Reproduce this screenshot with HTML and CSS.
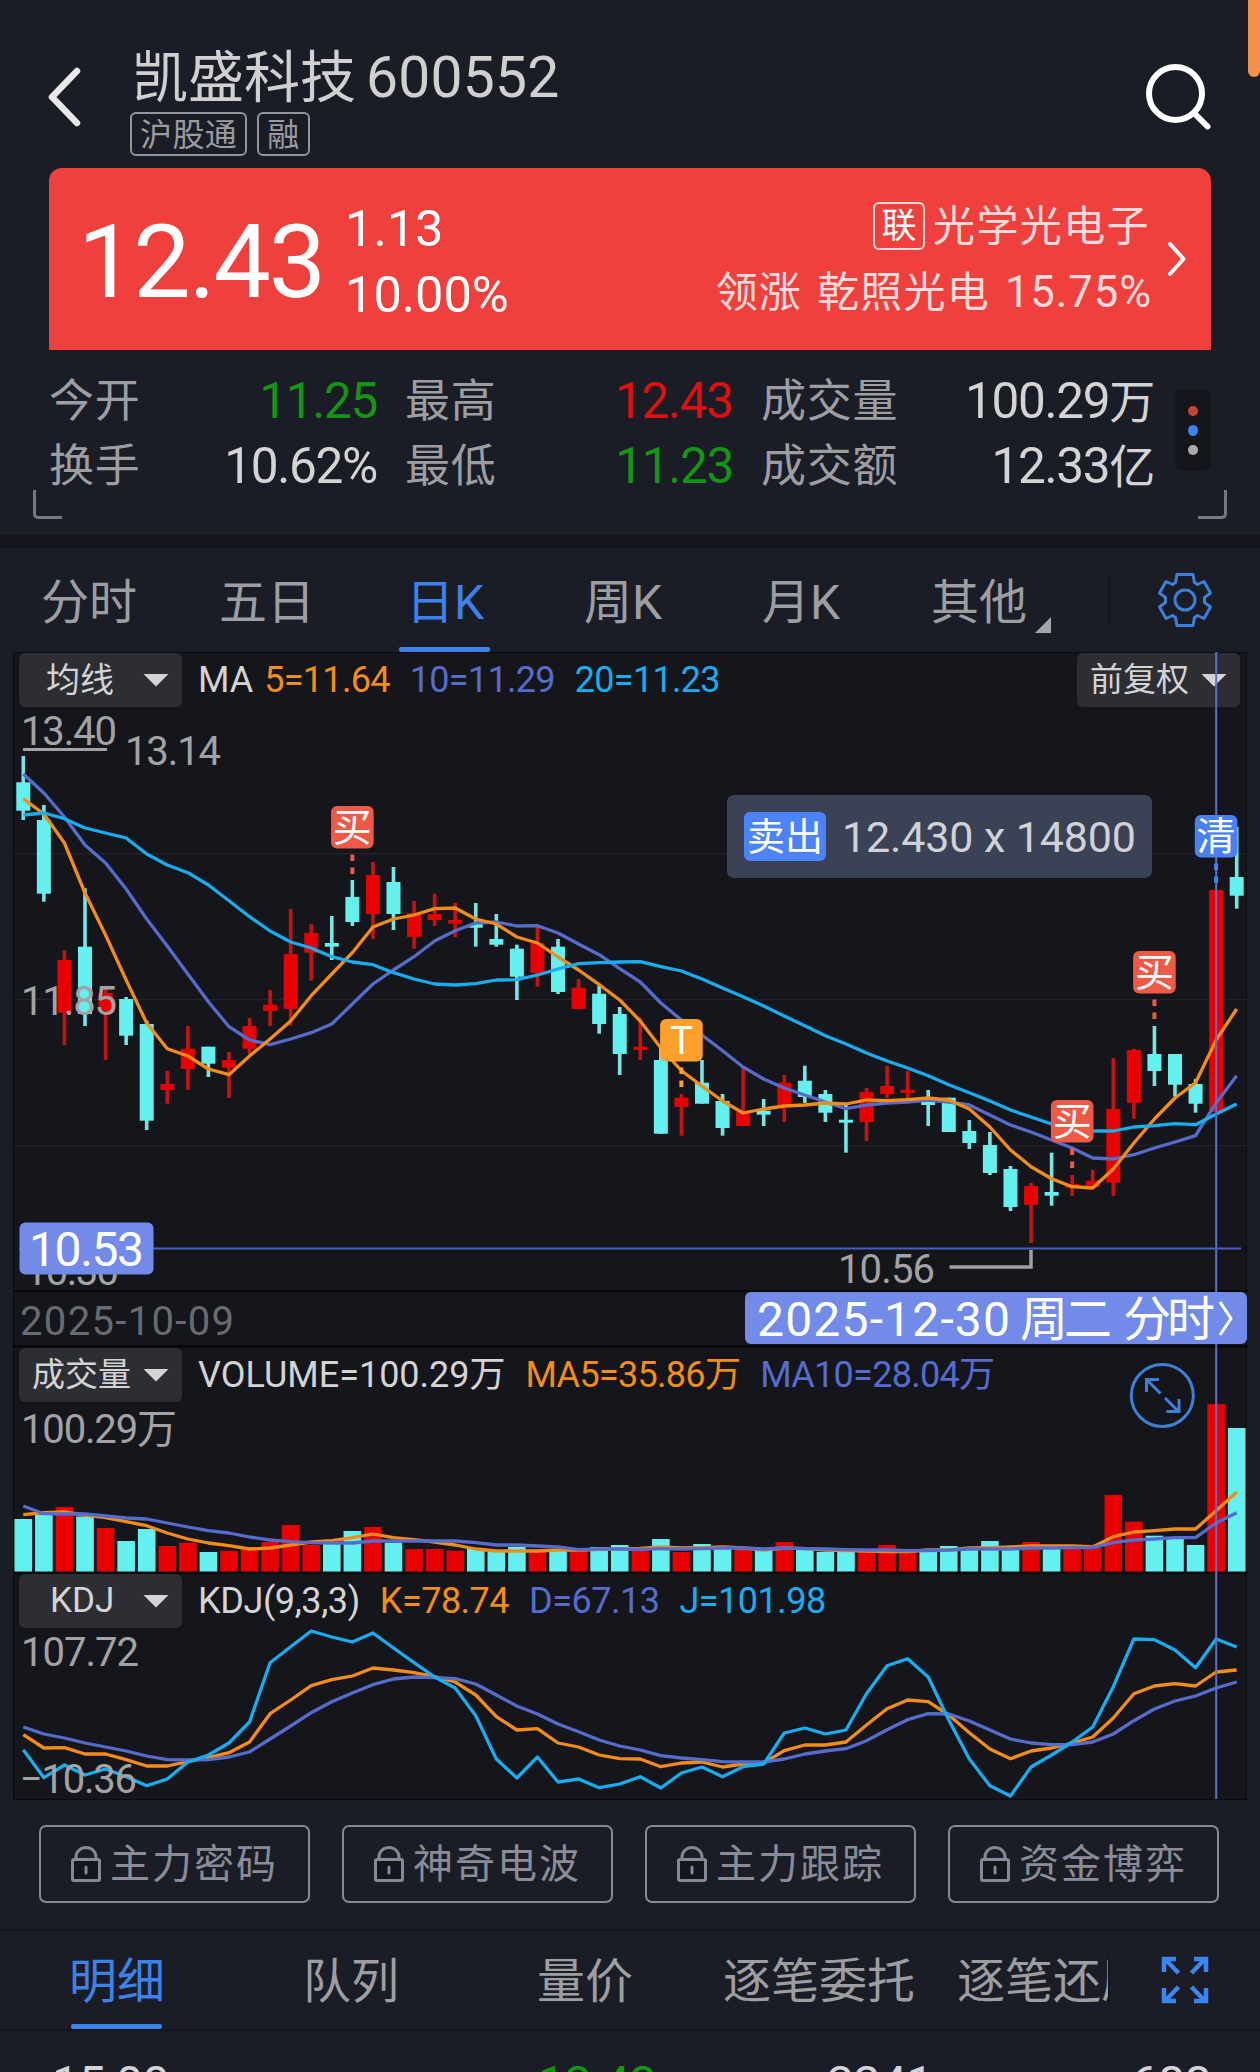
FILE: index.html
```html
<!DOCTYPE html>
<html lang="zh-CN">
<head>
<meta charset="utf-8">
<title>凯盛科技 600552</title>
<link rel="stylesheet" href="styles.css">
</head>
<body>
<div class="app">
  <div class="edge-bar"></div>
  <header class="header">
    <svg class="back" width="36" height="62" viewBox="0 0 36 62"><path d="M31 5 6 31 31 57"/></svg>
    <div class="title-block">
      <h1 class="title">凯盛科技<span class="code">600552</span></h1>
      <div class="tags"><span class="tag">沪股通</span><span class="tag">融</span></div>
    </div>
    <svg class="search" width="68" height="68" viewBox="0 0 68 68"><circle cx="30.5" cy="30.500" r="26.500"/><path d="M49 50 62.500 63.500"/></svg>
  </header>

  <section class="quote">
    <div class="price">12.43</div>
    <div class="change"><div>1.13</div><div>10.00%</div></div>
    <div class="sector">
      <div class="sector-name"><span class="link-tag">联</span><span>光学光电子</span></div>
      <div class="leader"><span>领涨</span><span>乾照光电</span><span class="pct">15.75%</span></div>
    </div>
    <svg class="more" width="20" height="38" viewBox="0 0 20 38"><path d="M3 4 16.500 19 3 34"/></svg>
  </section>

  <section class="stats">
    <div class="stat-grid">
      <span class="label">今开</span><span class="value down">11.25</span>
      <span class="label">最高</span><span class="value up">12.43</span>
      <span class="label">成交量</span><span class="value">100.29<small>万</small></span>
      <span class="label">换手</span><span class="value">10.62%</span>
      <span class="label">最低</span><span class="value down">11.23</span>
      <span class="label">成交额</span><span class="value">12.33<small>亿</small></span>
    </div>
    <div class="dots"><i class="dot red"></i><i class="dot blue"></i><i class="dot"></i></div>
  </section>
  <div class="corners"><i class="corner left"></i><i class="corner right"></i></div>

  <nav class="periods">
    <span class="period">分时</span>
    <span class="period">五日</span>
    <span class="period active">日K</span>
    <span class="period">周K</span>
    <span class="period">月K</span>
    <span class="period other">其他</span>
    <span class="gear-cell"><svg width="56" height="56" viewBox="-28 -28 56 56"><path d="M-8 -25.500H8L9.500 -17.500 12.500 -15.500 19 -18.500 25.500 -7 19.500 -2.500V2.500L25.500 7 19 18.500 12.500 15.500 9.500 17.500 8 25.500H-8L-9.500 17.500 -12.500 15.500 -19 18.500 -25.500 7 -19.500 2.500V-2.500L-25.500 -7 -19 -18.500 -12.500 -15.500 -9.500 -17.500Z"/><circle r="10"/></svg></span>
  </nav>

  <section class="chart">
    <div class="toolbar price-bar">
      <span class="select">均线<i class="caret"></i></span>
      <span class="legend"><b class="name">MA</b><b class="ma5">5=11.64</b><b class="ma10">10=11.29</b><b class="ma20">20=11.23</b></span>
      <span class="select adjust">前复权<i class="caret"></i></span>
    </div>
    <div class="toolbar volume-bar">
      <span class="select wide">成交量<i class="caret"></i></span>
      <span class="legend"><b>VOLUME=100.29万</b><b class="ma5">MA5=35.86万</b><b class="ma10">MA10=28.04万</b></span>
    </div>
    <div class="toolbar kdj-bar">
      <span class="select latin">KDJ<i class="caret"></i></span>
      <span class="legend kdj"><b>KDJ(9,3,3)</b><b class="ma5">K=78.74</b><b class="ma10">D=67.13</b><b class="ma20">J=101.98</b></span>
    </div>
    <svg class="plot" id="plot" viewBox="0 652 1260 1148" width="1260" height="1148"></svg>
  </section>

  <section class="tools">
    <span class="tool"><svg class="lock" width="30" height="36" viewBox="0 0 30 36"><path d="M5 13V11a10 9.500 0 0 1 20 0v2"/><rect x="1.500" y="13.500" width="27" height="21" rx="1.500"/><path class="key" d="M15 21v6"/></svg>主力密码</span>
    <span class="tool"><svg class="lock" width="30" height="36" viewBox="0 0 30 36"><path d="M5 13V11a10 9.500 0 0 1 20 0v2"/><rect x="1.500" y="13.500" width="27" height="21" rx="1.500"/><path class="key" d="M15 21v6"/></svg>神奇电波</span>
    <span class="tool"><svg class="lock" width="30" height="36" viewBox="0 0 30 36"><path d="M5 13V11a10 9.500 0 0 1 20 0v2"/><rect x="1.500" y="13.500" width="27" height="21" rx="1.500"/><path class="key" d="M15 21v6"/></svg>主力跟踪</span>
    <span class="tool"><svg class="lock" width="30" height="36" viewBox="0 0 30 36"><path d="M5 13V11a10 9.500 0 0 1 20 0v2"/><rect x="1.500" y="13.500" width="27" height="21" rx="1.500"/><path class="key" d="M15 21v6"/></svg>资金博弈</span>
  </section>

  <nav class="details">
    <div class="detail-list">
      <span class="detail active">明细</span>
      <span class="detail">队列</span>
      <span class="detail">量价</span>
      <span class="detail">逐笔委托</span>
      <span class="detail">逐笔还原</span>
    </div>
    <span class="expand"><svg width="48" height="48" viewBox="-24 -24 48 48"><path d="M-6.500 -7 -20 -21M-21 -8V-21H-9M6.500 -7 20 -21M21 -8V-21H9M-6.500 7 -20 21M-21 8V21H-9M6.500 7 20 21M21 8V21H9"/></svg></span>
  </nav>
  <div class="trade"><span class="time">15:00</span><span class="deal down">12.43</span><span class="qty">3341</span><span class="count">688</span></div>
</div>
<script src="chart.js"></script>
</body>
</html>
```
FILE: styles.css
```css
* { box-sizing: border-box; }
body {
  margin: 0;
  background: #1b1d26;
  color: #d4d4d5;
  font-family: Roboto, "Noto Sans CJK SC", sans-serif;
  font-weight: 400;
}
svg { display: block; flex: none; }
.app { position: relative; width: 1260px; height: 2072px; overflow: hidden; }
.edge-bar { position: absolute; right: 0; top: 0; width: 12px; height: 77px; background: #f2924c; border-radius: 0 0 6px 6px; }

.header { display: flex; height: 168px; padding: 0 49px 0 46px; }
.back { margin-top: 66px; fill: none; stroke: #e8e8e8; stroke-width: 6.5; stroke-linecap: round; stroke-linejoin: round; }
.title-block { flex: 1; padding: 43px 0 0 48px; }
.title { margin: 0 0 0 2px; font-size: 56px; line-height: 70px; font-weight: 400; white-space: nowrap; color: #d0d0d0; }
.code { margin-left: 10px; font-size: 57px; letter-spacing: 0.2px; }
.tags { display: flex; gap: 10px; margin-top: -1px; }
.tag { height: 44px; padding: 0 8px; border: 2px solid #94959a; border-radius: 6px; font-size: 32px; line-height: 43px; letter-spacing: 0.4px; color: #9b9ca0; }
.search { margin: 63px -2px 0 0; fill: none; stroke: #fff; stroke-width: 6; stroke-linecap: round; }

.quote { display: flex; height: 182px; margin: 0 49px; background: #ef403e; border-radius: 13px 13px 0 0; color: #fff; white-space: nowrap; }
.price { width: 267px; margin-left: 29px; font-size: 102px; line-height: 189px; letter-spacing: -2px; }
.change { flex: 1; padding-top: 28px; font-size: 50.5px; line-height: 66px; }
.sector { width: 440px; color: #ffdcdb; }
.sector-name { display: flex; justify-content: flex-end; align-items: center; gap: 8px; height: 62px; margin-top: 27px; font-size: 42px; line-height: 65px; letter-spacing: 1.4px; }
.link-tag { width: 52px; height: 48px; border: 2px solid #ffdcdb; border-radius: 6px; color: #fff; font-size: 35px; line-height: 46px; letter-spacing: 0; text-align: center; }
.leader { display: flex; justify-content: flex-end; gap: 15px; margin: 3px -2px 0 0; font-size: 42px; line-height: 66px; letter-spacing: 1.2px; }
.pct { font-size: 43.5px; letter-spacing: 1px; }
.more { margin: 72px 24px 0 17px; fill: none; stroke: #fff; stroke-width: 4; stroke-linecap: round; stroke-linejoin: round; }

.stats { display: flex; justify-content: space-between; height: 140px; padding: 17px 49px 0; }
.stat-grid { display: grid; grid-template-columns: 110px 218px 136px 220px 173px 248px; grid-auto-rows: 65px; width: 1105px; padding-top: 2px; line-height: 65px; white-space: nowrap; }
.stat-grid .label { font-size: 45px; letter-spacing: 0.8px; color: #9d9ea2; }
.stat-grid .label:nth-child(6n+3),
.stat-grid .label:nth-child(6n+5) { padding-left: 28px; }
.value { font-size: 49.5px; letter-spacing: -1.3px; text-align: right; }
.value small { font-size: 46px; }
.down { color: #149614; }
.up { color: #e01010; }
.dots { display: flex; flex-direction: column; align-items: center; justify-content: center; gap: 9px; width: 36px; height: 81px; margin-top: 23px; background: #15161b; border-radius: 8px; }
.dot { width: 10px; height: 10.5px; border-radius: 50%; background: #aaaaad; }
.dot.red { background: #c24636; }
.dot.blue { background: #3d82f2; }
.corners { display: flex; justify-content: space-between; height: 45px; padding: 0 33px; }
.corner { width: 29px; height: 29px; border: solid #77787c; }
.corner.left { border-width: 0 0 3px 3px; border-radius: 0 0 0 5px; }
.corner.right { border-width: 0 3px 3px 0; border-radius: 0 0 5px 0; }

.periods { display: flex; height: 117px; border-top: 13px solid #15161b; }
.period { position: relative; width: 178px; text-align: center; font-size: 48px; line-height: 109px; color: #9d9ea2; white-space: nowrap; }
.active { color: #3d82ea; }
.period.active::after { content: ""; position: absolute; left: 43px; bottom: 0; width: 91px; height: 5px; border-radius: 2px; background: #3d82ea; }
.other::after { content: ""; position: absolute; left: 145px; top: 69px; width: 16px; height: 16px; background: #a5a6a9; clip-path: polygon(100% 0, 100% 100%, 0 100%); }
.gear-cell { display: flex; align-items: center; height: 49px; margin: 27px 0 0 40px; padding-left: 47px; border-left: 2px solid #15161b; }
.gear-cell svg { fill: none; stroke: #3f7fdc; stroke-width: 3; stroke-linejoin: round; }

.chart { display: grid; grid-template: 695px 226px 227px / 1260px; height: 1148px; }
.toolbar { grid-column: 1; display: flex; margin: 0 13px; padding-left: 5px; background: #15161b; border: 1px solid #0a0b0e; border-width: 1px 1px 0; }
.price-bar { grid-row: 1; }
.volume-bar { grid-row: 2; }
.kdj-bar { grid-row: 3; border-bottom-width: 1px; }
.plot { grid-column: 1; grid-row: 1 / 4; z-index: 1; }
.select { display: flex; justify-content: space-between; align-items: center; flex: none; width: 163px; height: 54px; padding: 0 13px 0 27px; border-radius: 6px; background: #2d2e33; font-size: 34px; line-height: 54px; }
.select.latin { padding-left: 31px; font-size: 35px; }
.select.wide, .select.adjust { padding-left: 13px; font-size: 33px; }
.adjust { margin: 0 6px 0 auto; }
.caret { width: 26px; height: 13px; background: #d4d4d5; clip-path: polygon(0 0, 100% 0, 50% 100%); }
.legend { display: flex; gap: 20px; padding-left: 16px; font-size: 36px; line-height: 54px; white-space: nowrap; }
.legend b { font-weight: 400; letter-spacing: 0; }
.legend .ma5, .legend .ma10, .legend .ma20 { letter-spacing: -0.7px; }
.legend .name { margin-right: -9px; }
.legend.kdj b { letter-spacing: -0.4px; }
.legend.kdj .ma5, .legend.kdj .ma10, .legend.kdj .ma20 { letter-spacing: -0.5px; }
.legend .ma5 { color: #f58c16; }
.legend .ma10 { color: #566ccd; }
.legend .ma20 { color: #16aef0; }

.line { fill: none; stroke-width: 3.3; stroke-linejoin: round; }
.line.ma5 { stroke: #f58c16; }
.line.ma10 { stroke: #566ccd; }
.line.ma20 { stroke: #16aef0; }
.axis { font-size: 40px; fill: #a3a3a6; }
.date { font-size: 40px; fill: #6a6b70; }
.pill { font-size: 48px; fill: #fff; }
.mark { font-size: 39px; fill: #fff; text-anchor: middle; }
.tip { font-size: 43px; fill: #d0d2d8; }
.tip-tag { font-size: 38px; fill: #fff; }
.circle-icon { fill: none; stroke: #3f7fd8; stroke-width: 3; }

.tools { display: flex; gap: 32px; height: 131px; padding: 25px 0 0 39px; border-bottom: 2px solid #15161b; }
.tool { display: flex; align-items: center; gap: 9px; width: 271px; height: 78px; padding-left: 30px; border: 2px solid #858896; border-radius: 7px; font-size: 40px; line-height: 73px; letter-spacing: 2px; color: #8a8c98; white-space: nowrap; }
.lock { fill: none; stroke: #858896; stroke-width: 3; }
.lock rect { fill: #15161b; }
.lock .key { stroke-linecap: round; }

.details { display: flex; height: 100px; border-bottom: 2px solid #15161b; }
.detail-list { display: flex; width: 1108px; overflow: hidden; }
.detail { position: relative; flex: none; width: 234px; text-align: center; font-size: 48px; line-height: 102px; color: #9d9ea2; white-space: nowrap; }
.detail.active { color: #3d82ea; }
.detail.active::after { content: ""; position: absolute; left: 71px; bottom: 0; width: 91px; height: 5px; border-radius: 2px; background: #3d82ea; }
.expand { height: 48px; margin-top: 25px; padding-left: 51px; border-left: 2px solid #15161b; }
.expand svg { fill: none; stroke: #3d86f2; stroke-width: 4.5; }
.trade { display: grid; grid-template-columns: 300px 356px 277px 278px; height: 90px; padding-top: 23px; font-size: 48px; line-height: 60px; letter-spacing: -0.5px; }
.time { padding-left: 52px; }
.deal, .qty, .count { text-align: right; }
```
FILE: chart.js
```js
const NS = 'http://www.w3.org/2000/svg';
const plot = document.getElementById('plot');
const RED = '#e80000', CYAN = '#64f0ee';
const cx = i => 23.3 + i * 20.566;

function add(tag, attrs, text) {
  const el = document.createElementNS(NS, tag);
  for (const k in attrs) el.setAttribute(k, attrs[k]);
  if (text) el.textContent = text;
  plot.appendChild(el);
}
const rect = (x, y, width, height, fill, rx) => add('rect', { x, y, width, height, fill, rx: rx || 0 });
const line = (values, cls) => add('polyline', { class: 'line ' + cls, points: values.map((v, i) => cx(i) + ',' + v).join(' ') });
const label = (s, x, y, cls, width) => add('text', width ? { x, y, class: cls, textLength: width } : { x, y, class: cls }, s);

// pane separators and grid
rect(13, 1290, 1235, 2, '#08090b');
rect(13, 1345, 1235, 2, '#08090b');
rect(13, 1572, 1235, 2, '#08090b');
[853, 999, 1145].forEach(y => rect(14, y, 1233, 1.3, '#232429'));

// direction, high, body top, body bottom, low
const candles = [
  ['c',756,782.3,810.7,820],['c',805,820,893.7,901.7],['r',950.3,960,1012.7,1045],['c',888.3,946.7,1014,1026],['r',989,993,1012,1060],
  ['c',997,999,1035.7,1045],['c',1020.7,1024,1120.7,1130],['r',1071,1084,1090,1103.7],['r',1026,1048.7,1069,1090],['c',1046.7,1046.7,1063.7,1077],
  ['r',1052,1060,1067.7,1098],['r',1018,1026,1048.7,1054],['r',990,1004.7,1011,1026],['r',909,954,1009,1025.7],['r',924,933,952.7,980.7],
  ['c',916,943,946.7,960],['c',880,897,922,926],['r',862,875,914,939],['c',867,882,914,930],['r',901,913,937,948.7],
  ['r',893.7,914,920,926],['r',903,920,923.7,937],['c',903,924,927.7,946.7],['c',914,939,944.7,946.7],['c',944.7,948.7,976.7,1000],
  ['r',926.7,943,973,986.7],['c',939,946.7,992,994],['r',979,987.7,1009,1009],['c',986,993.7,1024,1033.7],['c',1007,1014,1054,1075],
  ['r',1018,1046.7,1050,1060],['c',1046,1060,1133.7,1133.7],['r',1094,1097.7,1107,1135.7],['c',1060,1082.7,1103.7,1103.7],['c',1094,1101,1128,1135.7],
  ['r',1067,1111.7,1126,1126],['c',1099,1110.7,1114.7,1126],['r',1075,1082.7,1105,1122],['c',1065.7,1080.7,1097,1103],['c',1090,1094,1112.7,1122],
  ['c',1105,1119.7,1122.7,1152.7],['r',1088,1092,1122,1141],['r',1065.7,1086,1094,1098],['r',1070.7,1089.7,1093,1099],['c',1090,1101.7,1105,1126],
  ['c',1097.7,1097.7,1132,1132],['c',1120,1131,1143,1149],['c',1132,1145,1173,1175],['c',1166,1169,1207,1211],['r',1183,1186,1205,1243],
  ['c',1152.7,1192,1195.7,1205.7],['r',1175,1184,1187.7,1196],['r',1169.7,1180.7,1187,1187],['r',1058,1109,1182.7,1196],['r',1048.7,1050,1103,1118.7],
  ['c',1026,1054,1071,1086],['c',1054,1054,1084.7,1096.7],['c',1079,1084,1103.7,1112.7],['r',890,890,1112,1112],['c',827,877,895.7,908.7]
];
candles.forEach(([d, hi, top, bot, lo], i) => {
  rect(cx(i) - 1.8, hi, 3.6, lo - hi, d === 'r' ? '#c61212' : '#76e6e4');
  rect(cx(i) - 7, top, 14, bot - top, d === 'r' ? RED : CYAN);
});

line([774,793,817,845,863,889,919,946,974,1001.7,1026.7,1040,1044.7,1039,1032.7,1024,1004,984,970,956.7,941,930.7,923,922,926,925.7,933,944,954.7,968.7,982,1003,1020,1035,1050.7,1067,1079,1088,1095,1102,1108.7,1105,1103,1102,1100,1102,1105,1115,1125,1132,1140,1148,1158,1159,1154.7,1148,1142,1135.7,1103,1075.7], 'ma10');
line([798.7,814,843,893,935,980,1023,1048.7,1056,1069,1074.7,1056,1039,1021,995.7,974,952.7,927,919,915,908.7,908,919,924,937,943,957,970,984.7,1000,1021,1048,1070.7,1086,1101,1113,1109,1106,1105,1103,1104,1100,1100.7,1099.7,1098,1100,1109,1127,1150,1166.7,1178.7,1186.7,1188,1169,1143,1119,1098,1082.7,1040,1009], 'ma5');
line([815,813,818.7,828,833,838,854,865,872.7,885,900.7,916.7,931,942,948,956.7,962,964.7,972.7,979,984,985,983.7,980,979.7,975,969,963.7,962.7,962,961.7,966.7,971,979,988,996.7,1006,1016,1025.7,1035.7,1044,1053,1061,1068,1075.7,1084.7,1092.7,1101,1110,1117,1124,1129,1131,1131,1127,1125.7,1123.7,1124.7,1114,1104], 'ma20');

// volume bars share the candle directions
const volumes = [1519,1515,1507,1516.5,1528,1541,1529,1546,1542.7,1552,1550.7,1547,1542,1525,1545,1543,1531,1527,1542.7,1549,1549,1550.7,1549,1552,1547,1549,1550,1550.7,1547,1545,1550.7,1539,1552,1544,1549,1548,1550,1542,1549,1552,1551.7,1551.7,1545,1551.7,1551.7,1546,1549,1541,1550,1542,1549,1549,1548,1495,1521.7,1535.7,1539,1545,1404,1428];
volumes.forEach((y, i) => rect(cx(i) - 8.8, y, 17.6, 1571.5 - y, candles[i][0] === 'r' ? RED : CYAN));
line([1514.7,1512.7,1512,1515,1517.7,1521.7,1525.7,1533,1539,1543,1545.7,1549,1548,1545,1542,1540.7,1537.7,1534,1537.7,1539.7,1542,1545,1549,1551,1551,1551,1550,1550,1549.5,1549,1548.5,1547,1548,1547.7,1547,1548,1550,1548,1548.7,1550,1550.7,1551,1551.5,1551.7,1550,1550,1548,1547.7,1547,1546,1546,1546,1547,1536.7,1532,1530.7,1529,1529,1510.7,1492], 'ma5');
line([1506,1513.7,1514,1514,1516,1518,1519,1523,1527,1530.7,1533,1537,1540,1541.7,1542.7,1543,1543,1541,1541,1541,1541,1541,1542.7,1545,1545,1546,1547,1549.7,1549,1549,1549.5,1548.7,1549,1548.7,1548,1548,1549,1548,1548.7,1549,1549.7,1550,1550,1550.7,1550.5,1550,1549,1549,1549,1548,1548,1547.7,1547.7,1542.7,1540,1539,1537.7,1537.7,1523,1512.7], 'ma10');

// KDJ
line([1734.7,1748,1747.7,1754,1754,1759.7,1766,1766,1761.7,1757.7,1752.7,1742,1713.7,1700,1685.7,1679.7,1676,1668,1670,1672.7,1676.7,1682,1695,1716.7,1730,1728.7,1743,1747,1755,1758.7,1759,1766.7,1763,1762,1767,1764,1763,1750.7,1745,1745,1742,1725,1708.7,1700,1701.7,1715,1732.7,1749,1758.7,1751,1748,1743,1737,1718,1693.7,1686,1683.7,1686,1672,1670], 'ma5');
line([1727,1734,1738,1743,1747,1751,1756,1759.7,1760,1759.7,1757,1752,1739,1726,1712.7,1701.7,1693,1684.7,1679,1677,1677.7,1678.7,1684,1695,1706,1714,1724,1731.7,1740,1746,1750,1755.7,1758,1759.7,1761.7,1762,1762,1759,1754,1751,1748.7,1740.7,1729.7,1719.7,1713.7,1714,1721,1730,1739,1743,1744.7,1744.7,1742,1734,1720.7,1709,1701,1696,1688,1682], 'ma10');
line([1749.7,1777.7,1765,1775,1769,1776.7,1785.7,1779,1762,1755,1743,1722,1662.7,1646.7,1631,1637,1642,1633,1648,1662.7,1677,1688,1715.7,1759,1778,1757,1782,1779,1787.7,1784,1776.7,1788,1773,1767,1776.7,1766.7,1764,1733,1728,1734,1730,1693.7,1665.7,1658.7,1677,1720,1759,1785.7,1796,1767,1755,1742,1727,1686.7,1639,1639.7,1650,1667.7,1639,1647], 'ma20');

// axis values
label('13.40', 21, 744.5, 'axis', 96);
rect(23, 748, 84, 3, '#a3a3a6');
label('13.14', 125, 764.5, 'axis', 96);
label('11.85', 21, 1014.5, 'axis', 96);
label('10.30', 25, 1284.5, 'axis', 94);
label('10.56', 838, 1283, 'axis', 97);
add('path', { d: 'M949.5 1267H1031V1250', fill: 'none', stroke: '#a0a0a2', 'stroke-width': 3.5 });
label('2025-10-09', 20, 1334.5, 'date', 214);
label('100.29万', 21, 1443, 'axis', 156);
label('107.72', 21, 1666, 'axis', 118);
label('−10.36', 20, 1792.7, 'axis', 117);

// crosshair
rect(1215.2, 652, 2, 1147, '#5b70ca');
rect(19, 1247.5, 1222, 2, '#4a5fb8');

// trade marks with dashed stems
[[16, 806, '买', '#ee5a46'], [32, 1019, 'T', '#ffa02c'], [51, 1100, '买', '#ee5a46'], [55, 951, '买', '#ee5a46'], [58, 815, '清', '#4a80f6']].forEach(([i, y, s, color]) => {
  rect(cx(i) - 21.3, y, 42.6, 42.5, color, 6);
  label(s, cx(i), y + 34.5, 'mark');
  rect(cx(i) - 2, y + 48.5, 4, 6.5, color);
  rect(cx(i) - 2, y + 61.5, 4, 6.5, color);
});

// trade tooltip
rect(727, 795, 425, 83, '#3c4256', 7);
rect(744, 812, 82, 49, '#4c82fa', 6);
label('卖出', 747, 850, 'tip-tag', 76);
label('12.430 x 14800', 842, 852, 'tip', 294);

// crosshair value and date
rect(19.5, 1222.5, 134, 52, '#728be8', 6);
label('10.53', 29, 1266, 'pill', 115);
rect(745, 1292, 502, 52, '#728be8', 6);
label('2025-12-30', 757, 1335.5, 'pill', 253);
label('周二', 1020, 1335.5, 'pill', 92);
label('分时', 1123, 1335.5, 'pill', 92);
add('path', { d: 'M1220 1302 1231 1318.5 1220 1335', fill: 'none', stroke: '#fff', 'stroke-width': 3 });

// zoom button
add('circle', { class: 'circle-icon', cx: 1162.3, cy: 1395.5, r: 31 });
add('path', { class: 'circle-icon', d: 'M1160.500 1393.500 1147 1380M1146.500 1392V1379.500H1159M1165 1398 1178.500 1411.500M1179 1399V1411.500H1166.500' });
```
